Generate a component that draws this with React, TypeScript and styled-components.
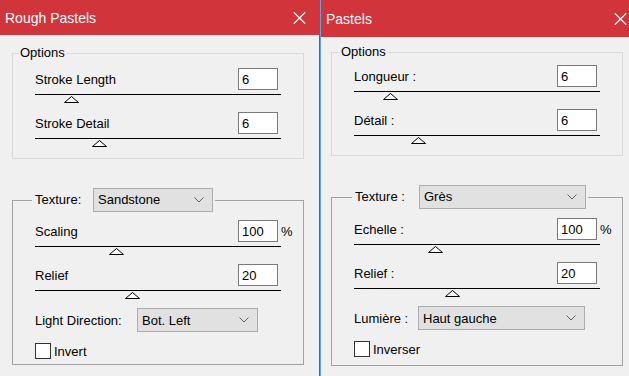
import React from 'react'
import styled, { createGlobalStyle } from 'styled-components'

const GlobalStyle = createGlobalStyle`
    html, body {
        margin     : 0;
        padding    : 0;
        background : #f0f0f0;
        overflow   : hidden;
    }
    body {
        font-family : "Liberation Sans", Arial, sans-serif;
        font-size   : 13px;
        color       : #000;
    }
`

type SliderData = { label: string, value: string, at: number, unit?: string }

type PanelData = {
    title: string
    width: number
    titleHeight: number
    closeGap: number
    bodyTop: number
    inset: number
    edge: boolean
    optionsIndent: number
    optionsTop: number
    sliders: SliderData[]
    textureIndent: number
    textureLabel: string
    textureLabelWidth: number
    textureValue: string
    textureWidth: number
    texturePadTop: number
    textureSliders: SliderData[]
    lightLabel: string
    lightLabelWidth: number
    lightValue: string
    lightWidth: number
    invert: string
    padBottom: number
}

const panels: PanelData[] = [
    {
        title: 'Rough Pastels',
        width: 320,
        titleHeight: 35,
        closeGap: 14,
        bodyTop: 10,
        inset: 12,
        edge: true,
        optionsIndent: 5,
        optionsTop: 7,
        sliders: [
            { label: 'Stroke Length', value: '6', at: 29 },
            { label: 'Stroke Detail', value: '6', at: 57 },
        ],
        textureIndent: 19,
        textureLabel: 'Texture:',
        textureLabelWidth: 58,
        textureValue: 'Sandstone',
        textureWidth: 120,
        texturePadTop: 8,
        textureSliders: [
            { label: 'Scaling', value: '100', unit: '%', at: 74 },
            { label: 'Relief', value: '20', at: 90 },
        ],
        lightLabel: 'Light Direction:',
        lightLabelWidth: 102,
        lightValue: 'Bot. Left',
        lightWidth: 121,
        invert: 'Invert',
        padBottom: 5,
    },
    {
        title: 'Pastels',
        width: 308,
        titleHeight: 37,
        closeGap: 2,
        bodyTop: 7,
        inset: 10,
        edge: false,
        optionsIndent: 7,
        optionsTop: 5,
        sliders: [
            { label: 'Longueur :', value: '6', at: 29 },
            { label: 'Détail :', value: '6', at: 57 },
        ],
        textureIndent: 20,
        textureLabel: 'Texture :',
        textureLabelWidth: 64,
        textureValue: 'Grès',
        textureWidth: 167,
        texturePadTop: 9,
        textureSliders: [
            { label: 'Echelle :', value: '100', unit: '%', at: 74 },
            { label: 'Relief :', value: '20', at: 91 },
        ],
        lightLabel: 'Lumière :',
        lightLabelWidth: 64,
        lightValue: 'Haut gauche',
        lightWidth: 167,
        invert: 'Inverser',
        padBottom: 8,
    },
]

const CloseIcon = () => (
    <svg width="13" height="12" viewBox="0 0 13 12">
        <path d="M0.8 0.3 L12.2 11.7 M12.2 0.3 L0.8 11.7" stroke="#fff" strokeWidth="1.3" fill="none" />
    </svg>
)

const Chevron = () => (
    <svg width="10" height="6" viewBox="0 0 10 6">
        <path d="M0.5 0.5 L5 5 L9.5 0.5" stroke="#606060" strokeWidth="1" fill="none" />
    </svg>
)

const Slider = ({ data }: { data: SliderData }) => (
    <Setting>
        <ValueRow>
            <Label>{data.label}</Label>
            <NumberBox>{data.value}</NumberBox>
            {data.unit && <Unit>{data.unit}</Unit>}
        </ValueRow>
        <Track>
            <Thumb $at={data.at} width="15" height="7" viewBox="0 0 15 7">
                <path d="M0.5 6.5 L7.5 0.5 L14.5 6.5 Z" stroke="#000" strokeWidth="1" fill="#fff" />
            </Thumb>
        </Track>
    </Setting>
)

const DialogPanel = ({ data }: { data: PanelData }) => (
    <Panel $width={data.width}>
        <TitleBar $height={data.titleHeight} $closeGap={data.closeGap}>
            <span>{data.title}</span>
            <CloseIcon />
        </TitleBar>
        <Body $top={data.bodyTop} $inset={data.inset} $edge={data.edge}>
            <Group $tone="light">
                <Legend $indent={data.optionsIndent} $pad={2}>Options</Legend>
                <GroupContent $top={data.optionsTop} $bottom={2}>
                    {data.sliders.map(s => <Slider key={s.label} data={s} />)}
                </GroupContent>
            </Group>

            <Group $tone="dark" $spaced>
                <Legend $indent={data.textureIndent} $pad={3}>
                    <FieldLabel $width={data.textureLabelWidth}>{data.textureLabel}</FieldLabel>
                    <Dropdown $width={data.textureWidth}>
                        <span>{data.textureValue}</span>
                        <Chevron />
                    </Dropdown>
                </Legend>
                <GroupContent $top={data.texturePadTop} $bottom={data.padBottom}>
                    {data.textureSliders.map(s => <Slider key={s.label} data={s} />)}
                    <SelectRow>
                        <FieldLabel $width={data.lightLabelWidth}>{data.lightLabel}</FieldLabel>
                        <Dropdown $width={data.lightWidth}>
                            <span>{data.lightValue}</span>
                            <Chevron />
                        </Dropdown>
                    </SelectRow>
                    <CheckRow>
                        <CheckBox />
                        <span>{data.invert}</span>
                    </CheckRow>
                </GroupContent>
            </Group>
        </Body>
    </Panel>
)

const App = () => (
    <>
        <GlobalStyle />
        <Screen>
            <DialogPanel data={panels[0]} />
            <Divider />
            <DialogPanel data={panels[1]} />
        </Screen>
    </>
)

export default App

const Screen = styled.div`
    display  : flex;
    width    : 629px;
    height   : 376px;
    overflow : hidden;
`

const Panel = styled.div<{ $width: number }>`
    display        : flex;
    flex-direction : column;
    flex-shrink    : 0;
    width          : ${p => p.$width}px;
    background     : #f0f0f0;
`

const Divider = styled.div`
    flex-shrink : 0;
    width       : 1px;
    background  : #64a2da;
`

const TitleBar = styled.div<{ $height: number, $closeGap: number }>`
    display         : flex;
    align-items     : center;
    justify-content : space-between;
    box-sizing      : border-box;
    height          : ${p => p.$height}px;
    padding         : 0 ${p => p.$closeGap}px 0 5px;
    background      : #d1343a;
    color           : #fff;
    font-size       : 14px;
    flex-shrink     : 0;
`

const Body = styled.div<{ $top: number, $inset: number, $edge: boolean }>`
    flex           : 1;
    display        : flex;
    flex-direction : column;
    padding        : ${p => p.$top}px 0 0 ${p => p.$inset}px;
    border-right   : ${p => p.$edge ? '1px solid #d1343a' : 'none'};
`

const Group = styled.fieldset<{ $tone: 'light' | 'dark', $spaced?: boolean }>`
    box-sizing      : border-box;
    width           : 292px;
    min-inline-size : auto;
    margin          : ${p => p.$spaced ? '29px' : '0'} 0 0 0;
    padding         : 0;
    border          : 1px solid ${p => p.$tone === 'light' ? '#d9d9d9' : '#a3a3a3'};
`

const Legend = styled.legend<{ $indent: number, $pad: number }>`
    display     : flex;
    align-items : center;
    margin-left : ${p => p.$indent}px;
    padding     : 0 2px 0 ${p => p.$pad}px;
    line-height : 16px;
`

const GroupContent = styled.div<{ $top: number, $bottom: number }>`
    padding : ${p => p.$top}px 22px ${p => p.$bottom}px 22px;
`

const Setting = styled.div`
    margin-bottom : 9px;
`

const ValueRow = styled.div`
    display     : flex;
    align-items : center;
    height      : 22px;
`

const Label = styled.span`
    flex : 1;
`

const NumberBox = styled.div`
    display      : flex;
    align-items  : center;
    box-sizing   : border-box;
    width        : 40px;
    height       : 22px;
    margin-right : 3px;
    padding-left : 3px;
    border       : 1px solid #7a7a7a;
    background   : #fff;
`

const Unit = styled.span`
    width       : 0;
    white-space : nowrap;
`

const Track = styled.div`
    position   : relative;
    height     : 8px;
    margin-top : 4px;
    border-top : 1px solid #000;
`

const Thumb = styled.svg<{ $at: number }>`
    position : absolute;
    top      : 1px;
    left     : ${p => p.$at}px;
`

const FieldLabel = styled.span<{ $width: number }>`
    flex-shrink : 0;
    width       : ${p => p.$width}px;
    white-space : nowrap;
`

const Dropdown = styled.div<{ $width: number }>`
    display         : flex;
    align-items     : center;
    justify-content : space-between;
    box-sizing      : border-box;
    width           : ${p => p.$width}px;
    height          : 24px;
    padding         : 0 8px 0 4px;
    border          : 1px solid #adadad;
    background      : #e1e1e1;
`

const SelectRow = styled.div`
    display     : flex;
    align-items : center;
    margin-top  : 4px;
`

const CheckRow = styled.div`
    display     : flex;
    align-items : center;
    gap         : 3px;
    margin-top  : 11px;
    height      : 16px;
`

const CheckBox = styled.div`
    box-sizing : border-box;
    width      : 16px;
    height     : 16px;
    border     : 1px solid #333;
    background : #fff;
`
